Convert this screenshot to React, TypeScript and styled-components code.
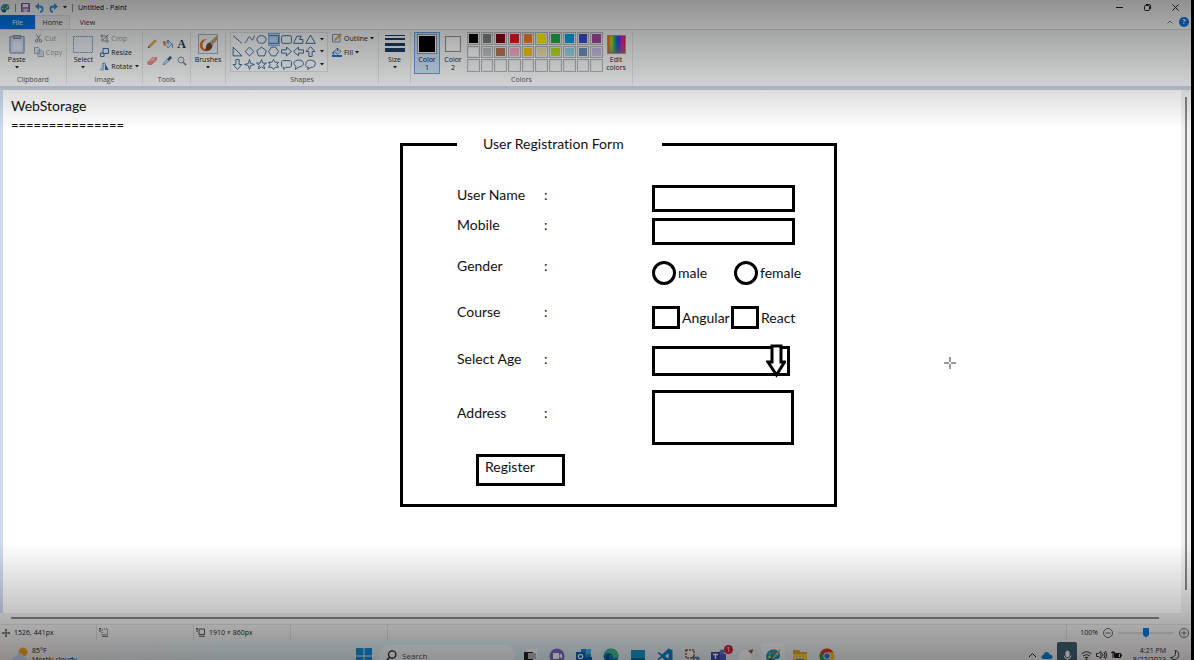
import React from "react";
import styled, { createGlobalStyle, css } from "styled-components";

const uiFont = '"Open Sans", "Noto Sans", sans-serif';
const drawFont = 'Lato, "Open Sans", sans-serif';

const GlobalStyle = createGlobalStyle`
  * { box-sizing: border-box; }
  body { margin: 0; background: #000; }
  button, input, select, textarea { font: inherit; color: inherit; margin: 0; }
  svg { display: block; flex: none; }
`;

const Screen = styled.div`
  position: relative;
  display: flex;
  flex-direction: column;
  height: 100vh;
  margin-right: 3px;
  overflow: hidden;
  background: #f0f0f0;
  color: #222;
  font: 7px/9px ${uiFont};
`;

const Shade = styled.div`
  position: absolute;
  inset: 0;
  pointer-events: none;
  background:
    linear-gradient(to bottom, rgba(0, 0, 0, 0.43), rgba(0, 0, 0, 0.33) 30px, rgba(0, 0, 0, 0.14) 88px, rgba(0, 0, 0, 0) 130px),
    linear-gradient(to top, rgba(0, 0, 0, 0.41), rgba(0, 0, 0, 0.33) 25px, rgba(0, 0, 0, 0.23) 48px, rgba(0, 0, 0, 0) 118px);
`;

/* Title bar and tabs */

const TitleBar = styled.header`
  display: flex;
  align-items: center;
  height: 15px;
  padding: 0 12px 0 0;
  background: #fff;
  flex: none;
`;

const QuickBar = styled.div`
  display: flex;
  align-items: center;
  gap: 5px;
  flex: 1;
`;

const Divider = styled.span`
  width: 1px;
  height: 8px;
  background: #999;
`;

const WindowTitle = styled.h1`
  margin: 0;
  color: #000;
  font: 400 7px/9px ${uiFont};
`;

const PlainButton = styled.button`
  display: flex;
  align-items: center;
  padding: 0;
  border: 0;
  background: none;
`;

const WindowButtons = styled.div`
  display: flex;
  gap: 21px;
`;

const TabBar = styled.nav`
  display: flex;
  height: 14px;
  padding-right: 2px;
  background: #fff;
  flex: none;
`;

const Tab = styled.button<{ $kind?: "file" | "active" }>`
  width: 35px;
  padding: 0;
  border: 0;
  background: none;
  color: #333;
  ${(p) => p.$kind === "file" && css`background: #0078e8; color: #fff;`}
  ${(p) => p.$kind === "active" && css`background: #f5f6f7; border: 1px solid #e2e3e4; border-bottom: 0;`}
`;

const TabEnd = styled.div`
  display: flex;
  align-items: center;
  gap: 6px;
  margin-left: auto;
`;

const Help = styled.button`
  width: 10px;
  height: 10px;
  padding: 0;
  border: 0;
  border-radius: 50%;
  background: #0078e8;
  color: #fff;
  font: 700 7px/10px ${uiFont};
`;

/* Ribbon */

const Ribbon = styled.section`
  display: flex;
  height: 57px;
  background: #f5f6f7;
  border-top: 1px solid #dadbdc;
  flex: none;
`;

const GroupBox = styled.div<{ $width: number }>`
  display: flex;
  flex-direction: column;
  width: ${(p) => p.$width}px;
  margin: 1px 0 2px;
  border-right: 1px solid #dfe0e2;
`;

const GroupBody = styled.div`
  display: flex;
  justify-content: center;
  gap: 4px;
  height: 44px;
  padding-top: 1px;
`;

const GroupName = styled.div`
  color: #555;
  text-align: center;
`;

const BigButton = styled.button<{ $active?: boolean }>`
  display: flex;
  flex-direction: column;
  align-items: center;
  width: 26px;
  height: 42px;
  padding: 1px 0 0;
  border: 1px solid transparent;
  background: none;
  line-height: 8px;
  white-space: nowrap;
  ${(p) => p.$active && css`background: #c9e0f7; border-color: #62a2e4;`}
`;

const BigIcon = styled.span`
  display: flex;
  align-items: center;
  justify-content: center;
  height: 20px;
  margin-bottom: 2px;
`;

const BigCaret = styled.span`
  padding-top: 2px;
`;

const SmallStack = styled.div`
  display: flex;
  flex-direction: column;
  gap: 4px;
  padding-top: 1px;
`;

const SmallButton = styled.button<{ $muted?: boolean }>`
  display: flex;
  align-items: center;
  gap: 2px;
  height: 10px;
  padding: 0;
  border: 0;
  background: none;
  color: ${(p) => (p.$muted ? "#999" : "#222")};
  white-space: nowrap;
`;

const ToolGrid = styled.div`
  display: grid;
  grid-template-columns: repeat(3, 10px);
  grid-auto-rows: 10px;
  gap: 7px 5px;
  padding-top: 7px;
`;

const TextTool = styled(PlainButton)`
  justify-content: center;
  color: #1f3552;
  font: 700 12px/10px "Liberation Serif", serif;
`;

const Gallery = styled.div`
  display: grid;
  grid-template-columns: repeat(7, 1fr) 10px;
  grid-template-rows: repeat(3, 1fr);
  width: 98px;
  height: 40px;
  border: 1px solid #dcdfe3;
  background: #fafbfc;
`;

const ShapeButton = styled.button<{ $active?: boolean }>`
  display: flex;
  align-items: center;
  justify-content: center;
  padding: 0;
  border: 0;
  background: ${(p) => (p.$active ? "#b8daf9" : "none")};
  outline: ${(p) => (p.$active ? "1px solid #7db5ea" : "none")};
  outline-offset: -1px;
`;

const ColorBody = styled.div`
  display: flex;
  height: 44px;
  padding: 1px 0 0 3px;
`;

const Palette = styled.div`
  display: grid;
  grid-template-columns: repeat(10, 1fr);
  grid-template-rows: repeat(3, 1fr);
  gap: 1px;
  width: 136px;
  height: 40px;
  margin-left: 1px;
`;

const Swatch = styled.button<{ $color?: string }>`
  padding: 0;
  border: 1px solid #b4b6b9;
  box-shadow: inset 0 0 0 1px #eceef0;
  background: ${(p) => p.$color ?? "#f5f6f7"};
`;

const CurrentColor = styled.span<{ $color: string; $size: number }>`
  width: ${(p) => p.$size}px;
  height: ${(p) => p.$size}px;
  border: 1px solid #90949a;
  box-shadow: inset 0 0 0 1px #f5f6f7;
  background: ${(p) => p.$color};
`;

const Spectrum = styled.span`
  width: 19px;
  height: 19px;
  border: 1px solid #b09a80;
  background:
    linear-gradient(to bottom, transparent 40%, rgba(120, 120, 120, 0.6)),
    linear-gradient(to right, #e86a10, #c8d020 20%, #20c060 36%, #1060e8 54%, #6a30e0 68%, #f020b0 84%, #e02040);
`;

/* Workspace */

const Workspace = styled.main`
  display: flex;
  flex: 1;
  min-height: 0;
  border-top: 4px solid #c9cfdf;
  border-left: 3px solid #cfd9ee;
`;

const Canvas = styled.div`
  position: relative;
  flex: 1;
  padding: 6px 0 0 8px;
  background: #fff;
  color: #111;
  font: 14px/20px ${drawFont};
  font-variant-ligatures: none;
`;

const Note = styled.h2`
  margin: 0;
  font-size: 14px;
  font-weight: 400;
`;

const Underline = styled.div`
  font-size: 13px;
  line-height: 18px;
`;

const VerticalTrack = styled.div`
  display: flex;
  justify-content: center;
  width: 10px;
  padding: 7px 0 23px;
`;

const VerticalThumb = styled.div`
  width: 2px;
  background: #858585;
`;

const HorizontalTrack = styled.div`
  height: 11px;
  padding: 4px 32px 0 11px;
  flex: none;
`;

const HorizontalThumb = styled.div`
  height: 2px;
  background: #858585;
`;

const Crosshair = styled.svg`
  position: absolute;
  left: 941px;
  top: 267px;
`;

/* Registration form */

const Fieldset = styled.fieldset`
  width: 437px;
  margin: 1px 0 0 389px;
  padding: 32px 32px 18px 54px;
  border: 3px solid #000;
`;

const Legend = styled.legend`
  width: 205px;
  padding: 0 0 0 26px;
  line-height: 18px;
`;

const Columns = styled.div`
  display: flex;
`;

const LabelColumn = styled.div`
  width: 195px;
`;

const ControlColumn = styled.div`
  flex: 1;
`;

const LabelRow = styled.div<{ $height: number }>`
  display: grid;
  grid-template-columns: 87px auto;
  height: ${(p) => p.$height}px;
`;

const ControlRow = styled.div<{ $height: number }>`
  display: flex;
  align-items: flex-start;
  height: ${(p) => p.$height}px;
`;

const boxed = css`
  border: 3px solid #000;
  border-radius: 0;
  background: #fff;
  appearance: none;
  outline: 0;
`;

const TextInput = styled.input`
  ${boxed}
  width: 143px;
  height: 27px;
  padding: 0 4px;
`;

const SelectWrap = styled.div`
  position: relative;
`;

const AgeSelect = styled.select`
  ${boxed}
  display: block;
  width: 138px;
  height: 30px;
`;

const SelectArrow = styled.svg`
  position: absolute;
  right: 4px;
  top: -2px;
  pointer-events: none;
`;

const TextArea = styled.textarea`
  ${boxed}
  display: block;
  width: 142px;
  height: 55px;
  resize: none;
`;

const Choice = styled.label<{ $width: number }>`
  display: flex;
  align-items: center;
  gap: 2px;
  width: ${(p) => p.$width}px;
  white-space: nowrap;
`;

const Radio = styled.input`
  ${boxed}
  width: 24px;
  height: 24px;
  border-radius: 50%;
  flex: none;
`;

const Check = styled.input`
  ${boxed}
  width: 28px;
  height: 23px;
  flex: none;
`;

const Register = styled.button`
  ${boxed}
  display: block;
  width: 89px;
  height: 32px;
  margin-left: 19px;
  padding: 0 0 6px 6px;
  text-align: left;
`;

/* Status bar */

const StatusBar = styled.footer`
  display: flex;
  height: 16px;
  padding-right: 2px;
  border-top: 1px solid #dedede;
  background: #f2f0f0;
  flex: none;
`;

const StatusCell = styled.div`
  display: flex;
  align-items: center;
  gap: 4px;
  width: 97px;
  padding-left: 2px;
  border-right: 1px solid #d9d9d9;
`;

const Zoom = styled.div`
  display: flex;
  align-items: center;
  gap: 5px;
  margin-left: auto;
  padding-left: 13px;
  border-left: 1px solid #d9d9d9;
`;

const ZoomSlider = styled.input`
  width: 56px;
  height: 10px;
  appearance: none;
  background: linear-gradient(#d9d9d9, #d9d9d9) center / 100% 2px no-repeat;
  &::-webkit-slider-thumb {
    appearance: none;
    width: 6px;
    height: 10px;
    background: #0078e8;
    clip-path: polygon(0 0, 100% 0, 100% 75%, 50% 100%, 0 75%);
  }
`;

/* Taskbar */

const Taskbar = styled.div`
  display: grid;
  grid-template-columns: 1fr auto 1fr;
  height: 20px;
  overflow: hidden;
  background: linear-gradient(to right, #f6eeed, #e6f2f7 20%, #e4f2f8 45%, #f0f2f3 70%, #f5f1f1);
  flex: none;
`;

const Weather = styled.div`
  display: flex;
  align-items: flex-start;
  gap: 4px;
  padding: 6px 0 0 12px;
  white-space: nowrap;
`;

const Apps = styled.div`
  display: flex;
  align-items: flex-start;
  gap: 3px;
  padding-top: 3px;
`;

const AppButton = styled.button<{ $active?: boolean }>`
  display: flex;
  justify-content: center;
  width: 24px;
  height: 28px;
  padding: 5px 0 0;
  border: 0;
  border-radius: 3px;
  background: ${(p) => (p.$active ? "rgba(255,255,255,.6)" : "none")};
`;

const AppSlot = styled.div`
  position: relative;
`;

const Badge = styled.span`
  position: absolute;
  right: -2px;
  top: 2px;
  width: 9px;
  height: 9px;
  border-radius: 50%;
  background: #d81f3a;
  color: #fff;
  font: 7px/9px ${uiFont};
`;

const SearchBox = styled.label`
  display: flex;
  align-items: center;
  gap: 5px;
  width: 136px;
  height: 21px;
  margin: 2px 0 0;
  padding: 0 7px;
  border-radius: 11px;
  background: rgba(255, 255, 255, 0.7);
`;

const SearchInput = styled.input`
  width: 100px;
  padding: 0;
  border: 0;
  background: none;
  font: 8px/12px ${uiFont};
  &::placeholder { color: #555; }
`;

const Tray = styled.div`
  display: flex;
  justify-content: flex-end;
  align-items: flex-start;
  gap: 4px;
  padding: 2px 11px 0 0;
`;

const TrayIcon = styled.span`
  padding-top: 8px;
`;

const Mic = styled.button`
  display: flex;
  justify-content: center;
  width: 20px;
  height: 26px;
  padding: 8px 0 0;
  border: 0;
  border-radius: 2px;
  background: #43606f;
`;

const Clock = styled.div`
  width: 40px;
  padding: 4px 0 0;
  text-align: right;
  white-space: nowrap;
`;

/* Icons */

const Caret = () => (
  <svg width="4" height="3" viewBox="0 0 4 3"><path d="M0 0h4L2 2.6z" fill="#222" /></svg>
);

const PaintIcon = ({ size }: { size: number }) => (
  <svg width={size} height={size} viewBox="0 0 16 16">
    <path d="M8 1.5C3.5 2 .8 5.400 1.200 9.400 1.600 13.200 5.500 15.200 8.400 14.700c1.700-.4.8-2.300 1.600-3.200 1-1.200 3.600.5 4.700-2.200C16 5 13 1.200 8 1.500z" fill="#1593c8" />
    <path d="M3 13c2 2 4 2 5.500 1.600 1.300-.4.700-2 1.300-3L6 10z" fill="#0a6091" />
    <circle cx="4.500" cy="9" r="1.400" fill="#f4d03a" />
    <circle cx="5" cy="5.500" r="1.300" fill="#6bd07c" />
    <circle cx="8.500" cy="4" r="1.200" fill="#f07c3a" />
    <circle cx="12" cy="6" r="1.200" fill="#e6f2fa" />
    <path d="M15 1 8 9l-1 3 2.500-1.800L15.800 2z" fill="#d8b078" />
  </svg>
);

const SaveIcon = () => (
  <svg width="9" height="9" viewBox="0 0 9 9"><path d="M.5.500h8v8h-8z" fill="#a48bc8" stroke="#7a5ca8" /><path d="M2 1h5v3H2z" fill="#fff" /><path d="M2.500 6h4v3h-4z" fill="#ddd" /></svg>
);

const UndoIcon = ({ flip }: { flip?: boolean }) => (
  <svg width="9" height="10" viewBox="0 0 9 10">
    <g transform={flip ? "matrix(-1 0 0 1 9 0)" : undefined}>
      <path d="M2 3.500h3c3.500 0 3.500 5 0 5.500" fill="none" stroke="#2f9be8" strokeWidth="1.800" />
      <path d="M0 3.500 4 0v7z" fill="#2f9be8" />
    </g>
  </svg>
);

const PasteIcon = () => (
  <svg width="16" height="20" viewBox="0 0 16 20"><rect x="1" y="2.500" width="14" height="16.500" rx="1" fill="#d5e1f5" stroke="#8fa2c4" strokeWidth="1.500" /><path d="M4.500 1.500h7v3h-7z" fill="#a8b4c9" stroke="#7e8ca6" /><path d="M4 8h8v8H4z" fill="#e6effc" /></svg>
);

const CutIcon = () => (
  <svg width="9" height="9" viewBox="0 0 9 9" fill="none" stroke="#8a9099"><path d="m2.500.500 3 5.500M6.500.500l-3 5.500" /><circle cx="2.500" cy="7" r="1.300" /><circle cx="6.500" cy="7" r="1.300" /></svg>
);

const CopyIcon = () => (
  <svg width="10" height="10" viewBox="0 0 10 10" fill="#e3e9f1" stroke="#9caabd"><path d="M.500.500h4l1 1v5h-5zM4 3.500h4l1.500 1.500v4.500H4z" /><path d="M5.500 6h2.500M5.500 7.800h2.500" strokeWidth=".6" /></svg>
);

const SelectIcon = () => (
  <svg width="20" height="17" viewBox="0 0 20 17"><rect x=".5" y=".5" width="19" height="16" fill="#eef3f9" stroke="#6d92b8" strokeDasharray="1.500 .7" /></svg>
);

const CropIcon = () => (
  <svg width="9" height="9" viewBox="0 0 9 9" fill="none" stroke="#8d949c"><path d="M2 0v7h7M0 2h7v7M2 7l6.500-6.500" /></svg>
);

const ResizeIcon = () => (
  <svg width="9" height="9" viewBox="0 0 9 9" fill="#eaf3fc" stroke="#336fae"><path d="M3 .500h5.500v5H3zM.500 5h3.500v3.500H.500z" /></svg>
);

const RotateIcon = () => (
  <svg width="9" height="9" viewBox="0 0 10 9"><path d="M4 8.500V1.500L.500 8.500z" fill="#b3d6f3" stroke="#4c8cc6" strokeWidth=".6" /><path d="M5.500 8.500V1l4.300 7.500z" fill="#1f6fb4" /><path d="M2 2C3 .500 5 .500 6 1.500" fill="none" stroke="#336fae" /></svg>
);

const PencilIcon = () => (
  <svg width="10" height="10" viewBox="0 0 10 10"><path d="M1 9 2 6.500 8 .800 9.300 2 3.500 8z" fill="#f3b84c" stroke="#b57a25" strokeWidth=".6" /><path d="m1 9 .6-1.600 1 1z" fill="#333" /></svg>
);

const BucketIcon = () => (
  <svg width="11" height="10" viewBox="0 0 11 10"><path d="M2.500 5 6 1 10 5 6 9z" fill="#d9e7f5" stroke="#5f8fc0" strokeWidth=".8" /><path d="M.800 2.500C3 1 4.500 3 3.500 6 2.500 8 1 6 .800 2.500z" fill="#ee7d2b" /><path d="M6 1v4M10 5c1 1 .8 3 .6 4" stroke="#3a78ba" fill="none" /></svg>
);

const EraserIcon = () => (
  <svg width="10" height="10" viewBox="0 0 10 10"><path d="M.500 6.500 5.500 1.500h4L9.300 4 4.500 8.500h-3z" fill="#f08a86" stroke="#c2605e" strokeWidth=".6" /><path d="M5.500 1.500h4L6 5H2z" fill="#f9b4ae" /></svg>
);

const PickerIcon = () => (
  <svg width="10" height="10" viewBox="0 0 10 10"><path d="m1 9 1-2.500L5.500 3 7 4.500 3.500 8z" fill="#cfe6f9" stroke="#5187b8" strokeWidth=".7" /><path d="M4.500 2.500 6 2.700 7.500.500C9 0 10 1 9.500 2.500L7.300 4l.2 1.500z" fill="#2b4f7a" /></svg>
);

const MagnifierIcon = () => (
  <svg width="10" height="10" viewBox="0 0 10 10"><circle cx="4" cy="4" r="3" fill="#e5f1fb" stroke="#8995a3" /><path d="m6.200 6.200 3 3" stroke="#9b6c4a" strokeWidth="1.600" /></svg>
);

const BrushIcon = () => (
  <svg width="20" height="20" viewBox="0 0 20 20">
    <rect x=".5" y=".5" width="19" height="19" fill="#eef1f4" stroke="#9fb0c0" />
    <path d="M9 5C4 4.500 1 9 2 12.500 3 16.500 7 18.500 12 16.500 8 16.500 5 15 4.500 12 4 9 6 6.500 9 5z" fill="#e8651c" />
    <path d="M19 1.500 12 8l2.500 3L19 6z" fill="#c89a62" />
    <path d="M12.200 8 9.500 9.500C7.500 11.500 9 14 6.500 16c4 1.500 8-.5 8-4.500z" fill="#6f4425" />
    <path d="m11.500 8 1.500-1 2.500 3-1 1.500z" fill="#a8b2bd" />
  </svg>
);

const OutlineIcon = () => (
  <svg width="10" height="10" viewBox="0 0 10 10"><path d="M.500 1.500h7.500v7.500H.500z" fill="#f4f8fc" stroke="#7396ba" /><path d="m2.500 7.500.8-2L8.500.500l1 1L4.500 6.800z" fill="#f0b050" stroke="#b87a30" strokeWidth=".5" /></svg>
);

const FillIcon = () => (
  <svg width="10" height="10" viewBox="0 0 10 10"><path d="M2 4.500 5.500 1 9 4.500 5.500 7.500z" fill="#cfe0f2" stroke="#44709f" strokeWidth=".8" /><path d="M5.500 1v3" stroke="#44709f" /><path d="M0 8h10v2H0z" fill="#1c7ad0" /><path d="M1.500 4c-1 1-1.500 2-1 3.500h2z" fill="#1c7ad0" /></svg>
);

const SizeIcon = () => (
  <svg width="20" height="18" viewBox="0 0 20 18" fill="#1d3d63"><path d="M0 0h20v1H0zM0 3h20v2H0zM0 8h20v3H0zM0 13h20v4H0z" /></svg>
);

const shapePaths = [
  "M1 1.500 9 8.500",
  "M.500 7.500C3 9 3.500.500 5.500 3S7 8 9.500 1.500",
  "M5 1.500c5.500 0 5.500 7 0 7s-5.500-7 0-7z",
  "M.500 1.500h9v7h-9z",
  "M2 1.500h6q1.500 0 1.500 1.500v4q0 1.500-1.500 1.500H2Q.500 8.500.500 7V3Q.500 1.500 2 1.500z",
  "M.500 8.500 3.500 2h4L6 5h3v3.500z",
  "M5 1 9.300 8.500H.700z",
  "M1 1v8h8z",
  "M5 1l4 4-4 4-4-4z",
  "M5 1l4.300 3.300L7.700 9H2.300L.700 4.300z",
  "M3 1h4l2.500 4L7 9H3L.500 5z",
  "M.500 3.500h4.500V1l4.500 4L5 9V6.500H.500z",
  "M9.500 3.500H5V1L.500 5 5 9V6.500h4.500z",
  "M3.500 9.500V5H1l4-4.500L9 5H6.500v4.500z",
  "M3.500.500V5H1l4 4.500L9 5H6.500V.500z",
  "M5 .500 6 4l3.500 1L6 6 5 9.500 4 6 .500 5 4 4z",
  "M5 .500 6.200 3.700h3.300L6.900 5.700l1 3.300L5 7.100 2.100 9l1-3.300L.500 3.700h3.300z",
  "M5 .500 6.500 3h3L8 5l1.500 2.500h-3L5 9.500 3.500 7.500h-3L2 5 .500 3h3z",
  "M1.500 1.500h7l1 1v4l-1 1H4.500L2.500 9.500v-2h-1l-1-1v-4z",
  "M5 1c6 0 6 6 .5 6.200L2 9.500l.8-2.800C-.500 5 .500 1 5 1z",
  "M3 1.500c2-1 3-.5 4 0 2 0 3 2 2 3.500 0 2-2 3-3.500 2.500L2.500 9.500l.5-2.200C.500 7.500 0 5.500 1 4.500.500 3 1.500 1.500 3 1.500z",
];

const ShapeIcon = ({ d }: { d: string }) => (
  <svg width="11" height="11" viewBox="0 0 10 10" fill="none" stroke="#3b6c9d" strokeWidth=".9"><path d={d} /></svg>
);

const SizeFrame = ({ dashed }: { dashed?: boolean }) => (
  <svg width="9" height="9" viewBox="0 0 9 9" fill="none" stroke="#444" strokeWidth=".9"><path d="M3 1h5.500v5.500H3z" strokeDasharray={dashed ? "1 1" : undefined} /><path d="M1 0v4M0 .500h2M3 8.300h6" /></svg>
);

const appIcons: { name: string; art: React.ReactNode; active?: boolean }[] = [
  { name: "Task view", art: <><path d="M5 1h10v9H5z" fill="#fff" /><path d="M2 4h9v11H2z" fill="#222" /><path d="M6 5h8v6H6z" fill="#bbb" /></> },
  { name: "Chat", art: <><circle cx="8" cy="8" r="7.500" fill="#7a6cd0" /><path d="M4 5h6v6H4zM10.500 7 13 5.500v5L10.500 9z" fill="#fff" /></> },
  { name: "Outlook", art: <><path d="M5 1h10v14H5z" fill="#1f8ddb" /><path d="M10 1h5v5h-5z" fill="#49b8f2" /><path d="M5 9h11v6H5z" fill="#0f5fae" /><path d="M0 4h9v9H0z" fill="#0a63b8" /><circle cx="4.500" cy="8.500" r="2.200" fill="none" stroke="#fff" strokeWidth="1.200" /></> },
  { name: "Edge", art: <><circle cx="8" cy="8" r="7.500" fill="#0c78c8" /><path d="M.600 7C2-.500 14-1.500 15.500 7c.3 3.500-4 4-6 2.500C11 7 8 4.500 4.500 5 2.500 5.500 1 6.500.600 7z" fill="#44c48a" /><path d="M6 8c-.5 4 3 6.500 7 5-4 4-11 1.500-10-4 .5-2 2-3 4-2.500z" fill="#0a4f98" /></> },
  { name: "Desktop", art: <><path d="M1 2h14v10H1z" fill="#1798cc" /><path d="M1 10h14v2.500H1z" fill="#0f6a9a" /><path d="M5 14h6v1H5z" fill="#555" /></> },
  { name: "Visual Studio Code", art: <path d="M11.500.500 15.500 2v12l-4 1.500L5 9.500 2 12 .500 11 4 8 .500 5 2 4l3 2.500zM11.500 5 8 8l3.500 3z" fill="#1180cc" fillRule="evenodd" /> },
  { name: "Snipping Tool", art: <><path d="M2 2h8v8H2z" fill="#f5f5f5" stroke="#a34f2a" strokeWidth="1.500" strokeDasharray="2 1" /><path d="M8 9.500h7M9.500 8v7" stroke="#4d6f88" strokeWidth="1.500" /><circle cx="14" cy="11" r="1.800" fill="#6f93ab" /></> },
  { name: "Teams", art: <><circle cx="11" cy="4" r="2.500" fill="#6670cf" /><path d="M7 6h8v7q-3 3-7 0z" fill="#5059c0" /><path d="M0 4h9v9H0z" fill="#3f48ad" /><path d="M2 6.500h5M4.500 6.500V11" stroke="#fff" strokeWidth="1.300" /></> },
  { name: "Pinned app", art: <><circle cx="7" cy="9" r="6.500" fill="#fff" /><path d="m10 3 5-2-1 5z" fill="#a05a3c" /></> },
  { name: "Paint", art: null, active: true },
  { name: "File Explorer", art: <><path d="M1 2h6l1.500 2H15v10H1z" fill="#e5a51b" /><path d="M1 6h14v8H1z" fill="#ffd04d" /><path d="M4 11h8v4H4z" fill="#2d87cf" /></> },
  { name: "Chrome", art: <><circle cx="8" cy="8" r="7.500" fill="#f5c12c" /><path d="M1.500 4.200A7.500 7.500 0 0 1 14.500 4.300H8L5 9.500z" fill="#e0392b" /><path d="M1.500 4.200A7.500 7.500 0 0 0 8 15.500L11 10 5 9.500z" fill="#2da04c" /><circle cx="8" cy="8" r="3.500" fill="#fff" /><circle cx="8" cy="8" r="2.700" fill="#2c74e0" /></> },
];

const colors = [
  "#000", "#7f7f7f", "#880015", "#ed1c24", "#ff7f27", "#fff200", "#22b14c", "#00a2e8", "#3f48cc", "#a349a4",
  "#fff", "#c3c3c3", "#b97a57", "#ffaec9", "#ffc90e", "#efe4b0", "#b5e61d", "#99d9ea", "#7092be", "#c8bfe7",
];

const labels = [
  { text: "User Name", id: "user", height: 30 },
  { text: "Mobile", id: "mobile", height: 41 },
  { text: "Gender", id: "male", height: 46 },
  { text: "Course", id: "angular", height: 47 },
  { text: "Select Age", id: "age", height: 54 },
  { text: "Address", id: "address", height: 51 },
];

const Group = ({ name, width, children }: { name: string; width: number; children: React.ReactNode }) => (
  <GroupBox $width={width}>
    <GroupBody>{children}</GroupBody>
    <GroupName>{name}</GroupName>
  </GroupBox>
);

const Big = ({ icon, label, caret, active }: { icon: React.ReactNode; label: React.ReactNode; caret?: boolean; active?: boolean }) => (
  <BigButton $active={active}>
    <BigIcon>{icon}</BigIcon>
    {label}
    {caret && <BigCaret><Caret /></BigCaret>}
  </BigButton>
);

const RibbonBar = () => (
  <Ribbon>
    <Group name="Clipboard" width={67}>
      <Big icon={<PasteIcon />} label="Paste" caret />
      <SmallStack>
        <SmallButton $muted><CutIcon />Cut</SmallButton>
        <SmallButton $muted><CopyIcon />Copy</SmallButton>
      </SmallStack>
    </Group>
    <Group name="Image" width={76}>
      <Big icon={<SelectIcon />} label="Select" caret />
      <SmallStack>
        <SmallButton $muted><CropIcon />Crop</SmallButton>
        <SmallButton><ResizeIcon />Resize</SmallButton>
        <SmallButton><RotateIcon />Rotate<Caret /></SmallButton>
      </SmallStack>
    </Group>
    <Group name="Tools" width={48}>
      <ToolGrid>
        <PlainButton aria-label="Pencil"><PencilIcon /></PlainButton>
        <PlainButton aria-label="Fill with color"><BucketIcon /></PlainButton>
        <TextTool>A</TextTool>
        <PlainButton aria-label="Eraser"><EraserIcon /></PlainButton>
        <PlainButton aria-label="Color picker"><PickerIcon /></PlainButton>
        <PlainButton aria-label="Magnifier"><MagnifierIcon /></PlainButton>
      </ToolGrid>
    </Group>
    <Group name="" width={35}>
      <Big icon={<BrushIcon />} label="Brushes" caret />
    </Group>
    <Group name="Shapes" width={153}>
      <Gallery>
        {[0, 1, 2].map((row) => (
          <React.Fragment key={row}>
            {shapePaths.slice(row * 7, row * 7 + 7).map((d, i) => (
              <ShapeButton key={d} $active={row === 0 && i === 3} aria-label={`Shape ${row * 7 + i + 1}`}><ShapeIcon d={d} /></ShapeButton>
            ))}
            <ShapeButton aria-label="Scroll shapes"><Caret /></ShapeButton>
          </React.Fragment>
        ))}
      </Gallery>
      <SmallStack>
        <SmallButton><OutlineIcon />Outline<Caret /></SmallButton>
        <SmallButton><FillIcon />Fill<Caret /></SmallButton>
      </SmallStack>
    </Group>
    <Group name="" width={32}>
      <Big icon={<SizeIcon />} label="Size" caret />
    </Group>
    <GroupBox $width={222}>
      <ColorBody>
        <Big active icon={<CurrentColor $color="#000" $size={20} />} label={<>Color<br />1</>} />
        <Big icon={<CurrentColor $color="#fff" $size={16} />} label={<>Color<br />2</>} />
        <Palette>
          {Array.from({ length: 30 }, (_, i) => (
            <Swatch key={i} $color={colors[i]} aria-label={`Color ${i + 1}`} />
          ))}
        </Palette>
        <Big icon={<Spectrum />} label={<>Edit<br />colors</>} />
      </ColorBody>
      <GroupName>Colors</GroupName>
    </GroupBox>
  </Ribbon>
);

const RegistrationForm = () => (
  <form onSubmit={(e) => e.preventDefault()}>
    <Fieldset>
      <Legend>User Registration Form</Legend>
      <Columns>
        <LabelColumn>
          {labels.map((l) => (
            <LabelRow key={l.id} $height={l.height}>
              <label htmlFor={l.id}>{l.text}</label>
              <span>:</span>
            </LabelRow>
          ))}
        </LabelColumn>
        <ControlColumn>
          <ControlRow $height={33}><TextInput id="user" /></ControlRow>
          <ControlRow $height={43}><TextInput id="mobile" /></ControlRow>
          <ControlRow $height={45}>
            <Choice $width={82}><Radio type="radio" name="gender" id="male" />male</Choice>
            <Choice $width={68}><Radio type="radio" name="gender" />female</Choice>
          </ControlRow>
          <ControlRow $height={40}>
            <Choice $width={79}><Check type="checkbox" id="angular" />Angular</Choice>
            <Choice $width={68}><Check type="checkbox" />React</Choice>
          </ControlRow>
          <ControlRow $height={44}>
            <SelectWrap>
              <AgeSelect id="age" />
              <SelectArrow width="20" height="34" viewBox="0 0 20 34" fill="#fff" stroke="#000" strokeWidth="3">
                <path d="M6 2h9v16h3.500L10.500 31 2 18h4z" />
              </SelectArrow>
            </SelectWrap>
          </ControlRow>
          <ControlRow $height={64}><TextArea id="address" /></ControlRow>
        </ControlColumn>
      </Columns>
      <Register type="submit">Register</Register>
    </Fieldset>
  </form>
);

export default function App() {
  return (
    <>
      <GlobalStyle />
      <Screen>
        <TitleBar>
          <QuickBar>
            <PaintIcon size={10} />
            <Divider />
            <PlainButton aria-label="Save"><SaveIcon /></PlainButton>
            <PlainButton aria-label="Undo"><UndoIcon /></PlainButton>
            <PlainButton aria-label="Redo"><UndoIcon flip /></PlainButton>
            <PlainButton aria-label="Customize"><Caret /></PlainButton>
            <Divider />
            <WindowTitle>Untitled - Paint</WindowTitle>
          </QuickBar>
          <WindowButtons>
            <PlainButton aria-label="Minimize"><svg width="7" height="7" viewBox="0 0 7 7" stroke="#222"><path d="M0 3.500h7" /></svg></PlainButton>
            <PlainButton aria-label="Restore"><svg width="7" height="7" viewBox="0 0 7 7" stroke="#222" fill="none"><rect x=".5" y="1.500" width="5" height="5" rx="1" /><path d="M2 .500h3.500q1 0 1 1V5" /></svg></PlainButton>
            <PlainButton aria-label="Close"><svg width="7" height="7" viewBox="0 0 7 7" stroke="#222"><path d="m.500.500 6 6M6.500.500l-6 6" /></svg></PlainButton>
          </WindowButtons>
        </TitleBar>
        <TabBar>
          <Tab $kind="file">File</Tab>
          <Tab $kind="active">Home</Tab>
          <Tab>View</Tab>
          <TabEnd>
            <PlainButton aria-label="Collapse ribbon"><svg width="6" height="4" viewBox="0 0 6 4" fill="none" stroke="#777"><path d="M.500 3.500 3 1l2.500 2.500" /></svg></PlainButton>
            <Help aria-label="Help">?</Help>
          </TabEnd>
        </TabBar>
        <RibbonBar />
        <Workspace>
          <Canvas>
            <Note>WebStorage</Note>
            <Underline>===============</Underline>
            <RegistrationForm />
            <Crosshair width="12" height="12" viewBox="0 0 12 12" stroke="#333" fill="none">
              <path d="M6 0v5M6 7v5M0 6h5M7 6h5" />
            </Crosshair>
          </Canvas>
          <VerticalTrack><VerticalThumb /></VerticalTrack>
        </Workspace>
        <HorizontalTrack><HorizontalThumb /></HorizontalTrack>
        <StatusBar>
          <StatusCell>
            <svg width="8" height="8" viewBox="0 0 8 8" stroke="#333" strokeWidth=".8"><path d="M4 0v8M0 4h8M3 1h2M3 7h2M1 3v2M7 3v2" /></svg>
            1526, 441px
          </StatusCell>
          <StatusCell><SizeFrame dashed /></StatusCell>
          <StatusCell><SizeFrame />1910 × 860px</StatusCell>
          <StatusCell />
          <Zoom>
            <span>100%</span>
            <PlainButton aria-label="Zoom out"><svg width="10" height="10" viewBox="0 0 10 10" fill="none" stroke="#666"><circle cx="5" cy="5" r="4.500" /><path d="M2.500 5h5" /></svg></PlainButton>
            <ZoomSlider type="range" aria-label="Zoom" defaultValue={50} />
            <PlainButton aria-label="Zoom in"><svg width="10" height="10" viewBox="0 0 10 10" fill="none" stroke="#666"><circle cx="5" cy="5" r="4.500" /><path d="M2.500 5h5M5 2.500v5" /></svg></PlainButton>
          </Zoom>
        </StatusBar>
        <Taskbar>
          <Weather>
            <svg width="16" height="16" viewBox="0 0 16 16"><circle cx="11" cy="6" r="4.500" fill="#f7a427" /><path d="M3 16c-4-1-3-6 1-5.500C5 6 11 6.500 12 11c4 0 4 4.500 1 5z" fill="#c7d8f5" /></svg>
            <span>85°F<br />Mostly cloudy</span>
          </Weather>
          <Apps>
            <AppButton aria-label="Start">
              <svg width="16" height="16" viewBox="0 0 16 16" fill="#1490e4"><path d="M0 0h7.500v7.500H0zM8.500 0H16v7.500H8.500zM0 8.500h7.500V16H0zM8.500 8.500H16V16H8.500z" /></svg>
            </AppButton>
            <SearchBox>
              <svg width="11" height="11" viewBox="0 0 11 11" fill="none" stroke="#222" strokeWidth="1.300"><circle cx="6.200" cy="4.500" r="3.700" /><path d="M3.500 7.200.800 10.200" /></svg>
              <SearchInput placeholder="Search" />
            </SearchBox>
            {appIcons.map((a) => (
              <AppSlot key={a.name}>
                <AppButton $active={a.active} aria-label={a.name}>
                  {a.art ? <svg width="16" height="16" viewBox="0 0 16 16">{a.art}</svg> : <PaintIcon size={16} />}
                  {a.name === "Teams" && <Badge>1</Badge>}
                </AppButton>
              </AppSlot>
            ))}
          </Apps>
          <Tray>
            <TrayIcon><svg width="9" height="9" viewBox="0 0 9 9" fill="none" stroke="#222"><path d="m1 7 3.500-3.500L8 7" /></svg></TrayIcon>
            <TrayIcon><svg width="12" height="10" viewBox="0 0 12 10"><path d="M3 9C-.500 9 0 5 2.500 5 3 1.500 7.500 1 8.500 4.500 12 4 12.500 9 9.500 9z" fill="#0f80dc" /></svg></TrayIcon>
            <Mic aria-label="Microphone"><svg width="9" height="12" viewBox="0 0 9 12" fill="none" stroke="#fff"><rect x="3" y="1" width="3" height="6" rx="1.500" fill="#fff" /><path d="M1 5.500q.5 3.500 3.500 3.500T8 5.500M4.500 9v2.500" /></svg></Mic>
            <TrayIcon><svg width="11" height="10" viewBox="0 0 11 10" fill="none" stroke="#222" strokeWidth=".9"><path d="M.500 4q5-4.500 10 0M2 6q3.500-3 7 0M3.700 7.800q1.800-1.500 3.600 0" /><circle cx="5.500" cy="9" r=".6" fill="#222" /></svg></TrayIcon>
            <TrayIcon><svg width="11" height="10" viewBox="0 0 11 10" fill="none" stroke="#222" strokeWidth=".9"><path d="M.500 3.500h2L5 1.500v7L2.500 6.500h-2zM6.500 3.500q1 1.500 0 3M8 2q2 3 0 6M9.500 1q2.500 4 0 8" /></svg></TrayIcon>
            <TrayIcon><svg width="11" height="10" viewBox="0 0 11 10" fill="none" stroke="#111"><path d="M3.500 3.500h6v4h-6zM10.500 4.500v2M2 1v3M0 2.500h4M2 4v4" /><path d="M4.500 4.500h3v2h-3z" fill="#111" /></svg></TrayIcon>
            <Clock>4:21 PM<br />8/27/2023</Clock>
            <TrayIcon><svg width="10" height="10" viewBox="0 0 10 10" fill="none" stroke="#333"><path d="M5 .500C10 1 10.500 9 4 9.500 2.500 9.500 1 8.500.500 7.500 5 7.500 6.500 4 5 .500z" /></svg></TrayIcon>
          </Tray>
        </Taskbar>
        <Shade />
      </Screen>
    </>
  );
}
